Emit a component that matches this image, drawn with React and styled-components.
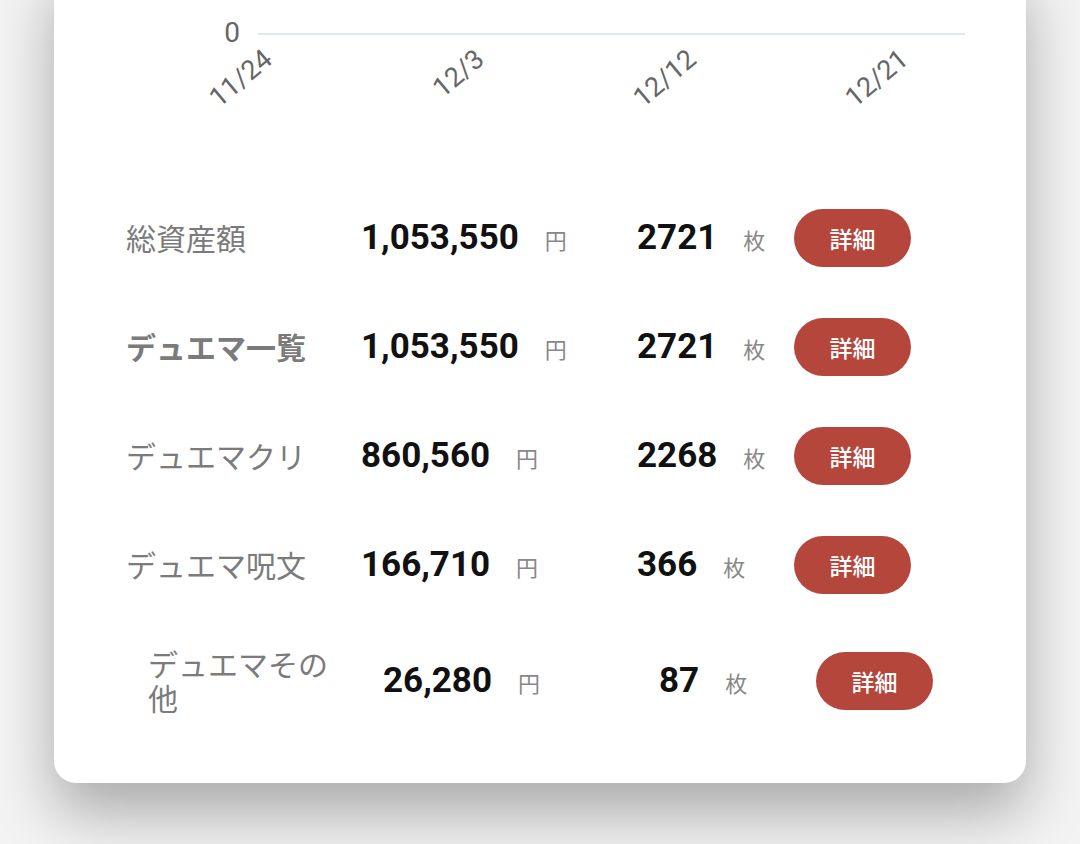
import React from 'react'
import styled, { createGlobalStyle } from 'styled-components'

const rows = [
  { label: '\u7dcf\u8cc7\u7523\u984d', amount: '1,053,550', count: '2721' },
  { label: '\u30c7\u30e5\u30a8\u30de\u4e00\u89a7', amount: '1,053,550', count: '2721', strong: true },
  { label: '\u30c7\u30e5\u30a8\u30de\u30af\u30ea', amount: '860,560', count: '2268' },
  { label: '\u30c7\u30e5\u30a8\u30de\u546a\u6587', amount: '166,710', count: '366' },
  { label: '\u30c7\u30e5\u30a8\u30de\u305d\u306e\u4ed6', amount: '26,280', count: '87', shift: true },
]

const YEN = '\u5186'
const MAI = '\u679a'
const DETAIL = '\u8a73\u7d30'

const ticks = [
  { x: 220, text: '11/24' },
  { x: 432, text: '12/3' },
  { x: 644, text: '12/12' },
  { x: 856, text: '12/21' },
]

const App = () => (
  <>
    <GlobalStyle />
    <Page>
      <Card>
        <ChartWrap>
          <svg width="972" height="183" viewBox="0 0 972 183">
            <text x="186" y="42" textAnchor="end" fontSize="28" fill="#666" fontFamily="Roboto, sans-serif">0</text>
            <line x1="204" y1="34" x2="911" y2="34" stroke="#e2e8f0" strokeWidth="2" />
            {ticks.map(({x, text}) => (
              <text
                key={text}
                x={x}
                y="62"
                textAnchor="end"
                fontSize="27"
                fill="#666"
                fontFamily="Roboto, sans-serif"
                transform={`rotate(-40 ${x} 62)`}
              >
                {text}
              </text>
            ))}
          </svg>
        </ChartWrap>
        <List>
          {rows.map(({label, amount, count, strong, shift}) => (
            <Row key={label} $shift={shift}>
              <Label $strong={strong}>{label}</Label>
              <Figure>
                <Number>{amount}</Number>
                <Unit>{YEN}</Unit>
              </Figure>
              <Figure>
                <Number>{count}</Number>
                <Unit>{MAI}</Unit>
              </Figure>
              <DetailButton>{DETAIL}</DetailButton>
            </Row>
          ))}
        </List>
      </Card>
    </Page>
  </>
)

const GlobalStyle = createGlobalStyle`
  body {
    margin: 0;
    background: #f3f3f3;
    font-family: Roboto, 'Noto Sans CJK JP', sans-serif;
  }
`

const Page = styled.div`
  min-height: 100vh;
  box-sizing: border-box;
  padding: 0 54px 62px;
`

const Card = styled.div`
  margin-top: -40px;
  background: #fff;
  border-radius: 22px;
  box-shadow: 0 30px 60px rgba(0, 0, 0, 0.3);
  padding-bottom: 44px;
`

const ChartWrap = styled.div`
  padding-top: 40px;
  line-height: 0;
`

const List = styled.div`
  display: flex;
  flex-direction: column;
  padding-left: 72px;
`

const Row = styled.div`
  display: grid;
  grid-template-columns: 235px 276px 157px 117px;
  align-items: center;
  padding: ${p => (p.$shift ? '28px 0 25px 22px' : '25.5px 0')};
`

const Label = styled.div`
  padding-right: 40px;
  font-family: 'Noto Sans CJK JP', sans-serif;
  font-size: 30px;
  line-height: 1.12;
  color: #7b7b7b;
  font-weight: ${p => (p.$strong ? 700 : 400)};
`

const Figure = styled.div`
  display: flex;
  align-items: baseline;
`

const Number = styled.span`
  font-family: Roboto, sans-serif;
  font-size: 35px;
  font-weight: 700;
  color: #111;
  line-height: 1;
`

const Unit = styled.span`
  margin-left: 26px;
  font-family: 'Noto Sans CJK JP', sans-serif;
  font-size: 22px;
  color: #888;
`

const DetailButton = styled.button`
  width: 117px;
  height: 58px;
  border: none;
  border-radius: 29px;
  background: #b4463c;
  color: #fff;
  font-family: 'Noto Sans CJK JP', sans-serif;
  font-size: 23px;
  font-weight: 500;
  padding: 0;
  cursor: pointer;
`

export default App
